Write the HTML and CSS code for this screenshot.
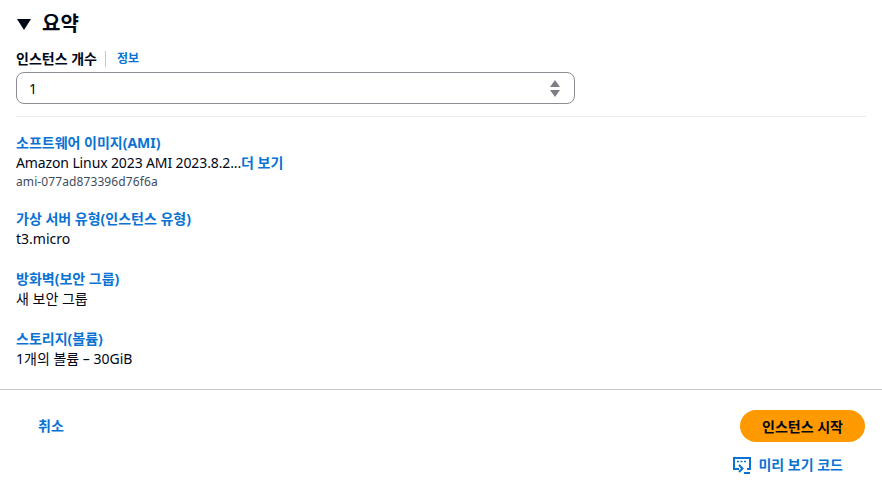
FILE: index.html
```html
<!DOCTYPE html>
<html lang="ko">
<head>
  <meta charset="UTF-8">
  <meta name="viewport" content="width=device-width, initial-scale=1.0">
  <title>요약</title>
  <link rel="stylesheet" href="styles.css">
</head>
<body>

<div class="summary">
  <h2 class="summary-title"><span class="caret"></span>요약</h2>

  <div class="field-label">
    <span class="label-text">인스턴스 개수</span>
    <a href="#" class="info-link">정보</a>
  </div>
  <div class="number-input">
    <span>1</span>
    <span class="spinner">
      <span class="spin-up"></span>
      <span class="spin-down"></span>
    </span>
  </div>

  <hr class="divider">

  <div class="item">
    <a href="#" class="item-title">소프트웨어 이미지(AMI)</a>
    <div class="item-value"><span class="ami-name">Amazon Linux 2023 AMI 2023.8.2...</span><a href="#" class="more-link">더 보기</a></div>
    <div class="item-sub">ami-077ad873396d76f6a</div>
  </div>

  <div class="item">
    <a href="#" class="item-title">가상 서버 유형(인스턴스 유형)</a>
    <div class="item-value">t3.micro</div>
  </div>

  <div class="item">
    <a href="#" class="item-title">방화벽(보안 그룹)</a>
    <div class="item-value">새 보안 그룹</div>
  </div>

  <div class="item">
    <a href="#" class="item-title">스토리지(볼륨)</a>
    <div class="item-value">1개의 볼륨 – 30GiB</div>
  </div>
</div>

<div class="footer">
  <div class="footer-row">
    <a href="#" class="cancel-link">취소</a>
    <button type="button" class="launch-button">인스턴스 시작</button>
  </div>
  <div class="preview-row">
    <a href="#" class="preview-link">
      <svg class="preview-icon" width="18" height="17" viewBox="0 0 18 17" fill="none">
        <path d="M6 12H1V1h16v11h-3" stroke="#0972d3" stroke-width="2"/>
        <path d="M4 4.500h2M7.500 4.500h2M11 4.500h2" stroke="#0972d3" stroke-width="1.500"/>
        <path d="M6 8l3.500 3.500L6 15" stroke="#0972d3" stroke-width="2"/>
        <path d="M11 16h6" stroke="#0972d3" stroke-width="2"/>
      </svg>
      미리 보기 코드
    </a>
  </div>
</div>

</body>
</html>
```

FILE: styles.css
```css
body {
  font-family: "Noto Sans", "Noto Sans CJK KR", sans-serif;
  font-size: 14px;
  margin: 0;
  padding: 0;
  background-color: #fff;
  color: #000716;
}

a {
  color: #0972d3;
  text-decoration: none;
  font-weight: 700;
}

.summary {
  padding: 10px 16px 0;
  border-bottom: 1px solid #c6c6cd;
  height: 379px;
}

.summary-title {
  display: flex;
  align-items: center;
  font-size: 20px;
  line-height: 28px;
  font-weight: 700;
  margin: 0 0 11px;
}

.caret {
  width: 0;
  height: 0;
  border-left: 7px solid transparent;
  border-right: 7px solid transparent;
  border-top: 11px solid #000716;
  margin: 1px 11px 0 1px;
}

.field-label {
  display: flex;
  align-items: center;
  font-size: 14px;
  line-height: 20px;
  margin-bottom: 3px;
}

.label-text {
  font-weight: 700;
  padding-right: 8px;
  border-right: 1px solid #c6c6cd;
  line-height: 16px;
}

.info-link {
  font-size: 12px;
  margin-left: 11px;
}

.number-input {
  display: flex;
  align-items: center;
  justify-content: space-between;
  width: 559px;
  height: 32px;
  box-sizing: border-box;
  border: 1px solid #8c8c94;
  border-radius: 8px;
  padding: 0 14px 0 12px;
}

.spinner {
  display: flex;
  flex-direction: column;
  gap: 3px;
}

.spin-up {
  border-left: 5px solid transparent;
  border-right: 5px solid transparent;
  border-bottom: 7px solid #7d7d85;
}

.spin-down {
  border-left: 5px solid transparent;
  border-right: 5px solid transparent;
  border-top: 7px solid #7d7d85;
}

.divider {
  border: none;
  border-top: 1px solid #e9ebed;
  margin: 12px 0 16px;
}

.item {
  margin-bottom: 20px;
  line-height: 20px;
}

.item-title {
  font-size: 14px;
  display: block;
}

.item-value {
  font-size: 14px;
}

.ami-name {
  letter-spacing: -0.12px;
}

.item-sub {
  font-size: 12px;
  line-height: 16px;
  letter-spacing: 0.1px;
  color: #414d5c;
  margin-bottom: -1px;
  padding-top: 1px;
}

.footer {
  padding: 20px 17px 0 38px;
}

.footer-row {
  display: flex;
  justify-content: space-between;
  align-items: center;
}

.cancel-link {
  padding-bottom: 2px;
}

.launch-button {
  font-family: inherit;
  font-size: 14px;
  font-weight: 700;
  color: #000716;
  background-color: #ff9900;
  border: none;
  border-radius: 16px;
  height: 32px;
  width: 125px;
  padding: 0;
}

.preview-row {
  display: flex;
  justify-content: flex-end;
  padding: 11px 22px 0 0;
}

.preview-link {
  display: flex;
  align-items: center;
  gap: 7px;
  line-height: 24px;
}
```
